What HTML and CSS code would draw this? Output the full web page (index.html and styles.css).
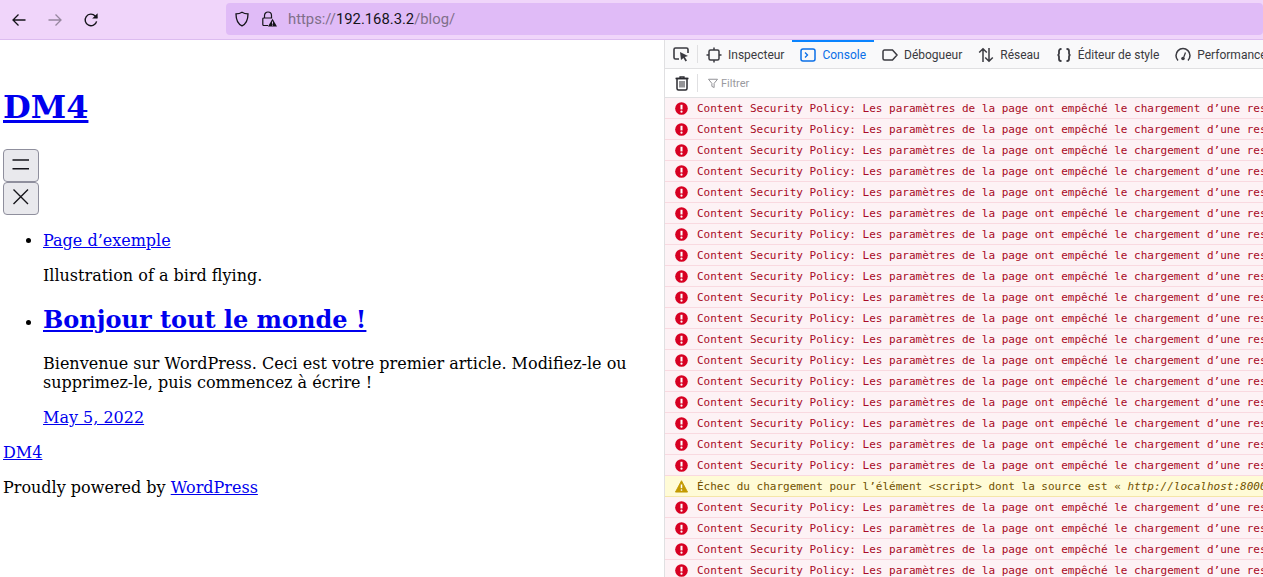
FILE: index.html
```html
<!DOCTYPE html>
<html lang="fr">
<head>
<meta charset="utf-8">
<title>DM4</title>
<link rel="stylesheet" href="styles.css">
</head>
<body>
<header class="toolbar">
  <div class="nav">
    <svg class="nav-ico" viewBox="0 0 16 16"><path d="M14.5 8H2M7.5 2.5 2 8l5.5 5.5" fill="none" stroke="#15141a" stroke-width="1.3"/></svg>
    <svg class="nav-ico dim" viewBox="0 0 16 16"><path d="M1.5 8H14M8.5 2.5 14 8l-5.5 5.5" fill="none" stroke="#15141a" stroke-width="1.3"/></svg>
    <svg class="nav-ico" viewBox="0 0 16 16"><path d="M13.6 9.3A5.8 5.8 0 1 1 12.2 4L14 5.8" fill="none" stroke="#15141a" stroke-width="1.4"/><path d="M14.6 1.2v5.4H9.2z" fill="#15141a"/></svg>
  </div>
  <div class="urlbar">
    <svg class="shield" viewBox="0 0 16 16"><path d="M8 1.2c2 1.2 4 1.6 6 1.7 0 5.5-1.5 9.7-6 11.9C3.500 12.600 2 8.400 2 2.900c2-.1 4-.5 6-1.700z" fill="none" stroke="#15141a" stroke-width="1.300"/></svg>
    <svg class="lock" viewBox="0 0 16 16"><path d="M3.500 7V4.500a3.500 3.500 0 0 1 7 0V7M7 14.500H2.800a1 1 0 0 1-1-1V8a1 1 0 0 1 1-1h8.400" fill="none" stroke="#15141a" stroke-width="1.200"/><path d="M11.500 7.800 16 15.500H7z" fill="#15141a"/><path d="M11.500 10.500v2.300M11.500 13.600v.9" stroke="#e0bbf7" stroke-width="1"/></svg>
    <span class="url"><span class="url-dim">https://</span>192.168.3.2<span class="url-dim">/blog/</span></span>
  </div>
</header>
<main class="split">
  <section class="page">
    <h1 class="site-title"><a href="#">DM4</a></h1>
    <button class="menu-btn" type="button"><svg viewBox="0 0 24 24"><path d="M3.500 6h16.500M3.500 14.800h16.500" stroke="#15141a" stroke-width="1.400"/></svg></button>
    <button class="menu-btn" type="button"><svg viewBox="0 0 24 24"><path d="M4.500 2.500l14.500 14.500M19 2.500 4.500 17" stroke="#15141a" stroke-width="1.400"/></svg></button>
    <ul class="posts">
      <li>
        <a href="#">Page d’exemple</a>
        <p>Illustration of a bird flying.</p>
      </li>
      <li>
        <h2 class="post-title"><a href="#">Bonjour tout le monde !</a></h2>
        <p>Bienvenue sur WordPress. Ceci est votre premier article. Modifiez-le ou supprimez-le, puis commencez à écrire !</p>
        <p><a href="#">May 5, 2022</a></p>
      </li>
    </ul>
    <p><a href="#">DM4</a></p>
    <p>Proudly powered by <a href="#">WordPress</a></p>
  </section>
  <section class="devtools">
    <nav class="tabs">
      <div class="picker">
        <svg class="ico" viewBox="0 0 16 16"><path d="M6 13H2.500A1.500 1.500 0 0 1 1 11.500v-8A1.500 1.500 0 0 1 2.500 2h11A1.500 1.500 0 0 1 15 3.500V7" fill="none" stroke="#3a3a40" stroke-width="1.600"/><path d="M7 6l8 4-3.200 1 2.200 3.500-1.500.9-2.100-3.500L8 14z" fill="#3a3a40"/></svg>
      </div>
      <div class="tab">
        <svg class="ico" viewBox="0 0 16 16"><rect x="3" y="3" width="10" height="10" rx="1.500" fill="none" stroke="#3a3a40" stroke-width="1.500"/><path d="M8 .5v2.500M8 13v2.500M.5 8H3M13 8h2.500" stroke="#3a3a40" stroke-width="1.500"/></svg>
        Inspecteur
      </div>
      <div class="tab active">
        <svg class="ico" viewBox="0 0 16 16"><rect x="1" y="2" width="14" height="12" rx="2" fill="none" stroke="#0a6fe8" stroke-width="1.500"/><path d="M5 5.500 7.500 8 5 10.500" fill="none" stroke="#0a6fe8" stroke-width="1.300"/></svg>
        Console
      </div>
      <div class="tab">
        <svg class="ico" viewBox="0 0 16 16"><path d="M2.500 3h8L15 8l-4.500 5h-8A1.500 1.500 0 0 1 1 11.500v-7A1.500 1.500 0 0 1 2.500 3z" fill="none" stroke="#3a3a40" stroke-width="1.500"/></svg>
        Débogueur
      </div>
      <div class="tab">
        <svg class="ico" viewBox="0 0 16 16"><path d="M5 15V2M1.200 5.500 5 1.700l3.800 3.800M11 1v13M7.200 10.500 11 14.300l3.800-3.800" fill="none" stroke="#3a3a40" stroke-width="1.500"/></svg>
        Réseau
      </div>
      <div class="tab">
        <svg class="ico" viewBox="0 0 16 16"><path d="M5.500 2H5a2 2 0 0 0-2 2v2.500C3 7.500 2 8 1.500 8 2 8 3 8.500 3 9.500V12a2 2 0 0 0 2 2h.5M10.500 2h.5a2 2 0 0 1 2 2v2.500c0 1 1 1.500 1.500 1.500-.5 0-1.500.5-1.500 1.500V12a2 2 0 0 1-2 2h-.5" fill="none" stroke="#3a3a40" stroke-width="1.800"/></svg>
        Éditeur de style
      </div>
      <div class="tab">
        <svg class="ico" viewBox="0 0 16 16"><path d="M3 13.500a7 7 0 1 1 10 0" fill="none" stroke="#3a3a40" stroke-width="1.500"/><path d="M10.500 5.500 8.800 10" stroke="#3a3a40" stroke-width="1.300"/><circle cx="8" cy="11.500" r="1.800" fill="#3a3a40"/></svg>
        Performances
      </div>
    </nav>
    <div class="filterbar">
      <div class="trash">
        <svg class="ico" viewBox="0 0 16 16"><path d="M1.500 3.500h13M6 3.500V1.800h4v1.700" fill="none" stroke="#2b2b30" stroke-width="1.300"/><path d="M3 3.500h10v10a1.500 1.500 0 0 1-1.500 1.500h-7A1.500 1.500 0 0 1 3 13.500z" fill="none" stroke="#2b2b30" stroke-width="1.500"/><path d="M6 6v6.500M8 6v6.500M10 6v6.500" stroke="#2b2b30" stroke-width="1"/></svg>
      </div>
      <div class="filter">
        <svg class="funnel" viewBox="0 0 16 16"><path d="M2 3h12L9.500 8.500V14l-3-1.500v-4z" fill="none" stroke="#8f8f94" stroke-width="1.300"/></svg>
        Filtrer
      </div>
    </div>
    <div class="log">
      <div class="msg"><svg class="msg-ico" viewBox="0 0 14 14"><circle cx="7" cy="7" r="6.800" fill="#d70022"/><path d="M7 3v5" stroke="#fff" stroke-width="2.200"/><circle cx="7" cy="10.400" r="1.200" fill="#fff"/></svg><span class="msg-text">Content Security Policy: Les paramètres de la page ont empêché le chargement d’une ressource</span></div>
      <div class="msg"><svg class="msg-ico" viewBox="0 0 14 14"><circle cx="7" cy="7" r="6.800" fill="#d70022"/><path d="M7 3v5" stroke="#fff" stroke-width="2.200"/><circle cx="7" cy="10.400" r="1.200" fill="#fff"/></svg><span class="msg-text">Content Security Policy: Les paramètres de la page ont empêché le chargement d’une ressource</span></div>
      <div class="msg"><svg class="msg-ico" viewBox="0 0 14 14"><circle cx="7" cy="7" r="6.800" fill="#d70022"/><path d="M7 3v5" stroke="#fff" stroke-width="2.200"/><circle cx="7" cy="10.400" r="1.200" fill="#fff"/></svg><span class="msg-text">Content Security Policy: Les paramètres de la page ont empêché le chargement d’une ressource</span></div>
      <div class="msg"><svg class="msg-ico" viewBox="0 0 14 14"><circle cx="7" cy="7" r="6.800" fill="#d70022"/><path d="M7 3v5" stroke="#fff" stroke-width="2.200"/><circle cx="7" cy="10.400" r="1.200" fill="#fff"/></svg><span class="msg-text">Content Security Policy: Les paramètres de la page ont empêché le chargement d’une ressource</span></div>
      <div class="msg"><svg class="msg-ico" viewBox="0 0 14 14"><circle cx="7" cy="7" r="6.800" fill="#d70022"/><path d="M7 3v5" stroke="#fff" stroke-width="2.200"/><circle cx="7" cy="10.400" r="1.200" fill="#fff"/></svg><span class="msg-text">Content Security Policy: Les paramètres de la page ont empêché le chargement d’une ressource</span></div>
      <div class="msg"><svg class="msg-ico" viewBox="0 0 14 14"><circle cx="7" cy="7" r="6.800" fill="#d70022"/><path d="M7 3v5" stroke="#fff" stroke-width="2.200"/><circle cx="7" cy="10.400" r="1.200" fill="#fff"/></svg><span class="msg-text">Content Security Policy: Les paramètres de la page ont empêché le chargement d’une ressource</span></div>
      <div class="msg"><svg class="msg-ico" viewBox="0 0 14 14"><circle cx="7" cy="7" r="6.800" fill="#d70022"/><path d="M7 3v5" stroke="#fff" stroke-width="2.200"/><circle cx="7" cy="10.400" r="1.200" fill="#fff"/></svg><span class="msg-text">Content Security Policy: Les paramètres de la page ont empêché le chargement d’une ressource</span></div>
      <div class="msg"><svg class="msg-ico" viewBox="0 0 14 14"><circle cx="7" cy="7" r="6.800" fill="#d70022"/><path d="M7 3v5" stroke="#fff" stroke-width="2.200"/><circle cx="7" cy="10.400" r="1.200" fill="#fff"/></svg><span class="msg-text">Content Security Policy: Les paramètres de la page ont empêché le chargement d’une ressource</span></div>
      <div class="msg"><svg class="msg-ico" viewBox="0 0 14 14"><circle cx="7" cy="7" r="6.800" fill="#d70022"/><path d="M7 3v5" stroke="#fff" stroke-width="2.200"/><circle cx="7" cy="10.400" r="1.200" fill="#fff"/></svg><span class="msg-text">Content Security Policy: Les paramètres de la page ont empêché le chargement d’une ressource</span></div>
      <div class="msg"><svg class="msg-ico" viewBox="0 0 14 14"><circle cx="7" cy="7" r="6.800" fill="#d70022"/><path d="M7 3v5" stroke="#fff" stroke-width="2.200"/><circle cx="7" cy="10.400" r="1.200" fill="#fff"/></svg><span class="msg-text">Content Security Policy: Les paramètres de la page ont empêché le chargement d’une ressource</span></div>
      <div class="msg"><svg class="msg-ico" viewBox="0 0 14 14"><circle cx="7" cy="7" r="6.800" fill="#d70022"/><path d="M7 3v5" stroke="#fff" stroke-width="2.200"/><circle cx="7" cy="10.400" r="1.200" fill="#fff"/></svg><span class="msg-text">Content Security Policy: Les paramètres de la page ont empêché le chargement d’une ressource</span></div>
      <div class="msg"><svg class="msg-ico" viewBox="0 0 14 14"><circle cx="7" cy="7" r="6.800" fill="#d70022"/><path d="M7 3v5" stroke="#fff" stroke-width="2.200"/><circle cx="7" cy="10.400" r="1.200" fill="#fff"/></svg><span class="msg-text">Content Security Policy: Les paramètres de la page ont empêché le chargement d’une ressource</span></div>
      <div class="msg"><svg class="msg-ico" viewBox="0 0 14 14"><circle cx="7" cy="7" r="6.800" fill="#d70022"/><path d="M7 3v5" stroke="#fff" stroke-width="2.200"/><circle cx="7" cy="10.400" r="1.200" fill="#fff"/></svg><span class="msg-text">Content Security Policy: Les paramètres de la page ont empêché le chargement d’une ressource</span></div>
      <div class="msg"><svg class="msg-ico" viewBox="0 0 14 14"><circle cx="7" cy="7" r="6.800" fill="#d70022"/><path d="M7 3v5" stroke="#fff" stroke-width="2.200"/><circle cx="7" cy="10.400" r="1.200" fill="#fff"/></svg><span class="msg-text">Content Security Policy: Les paramètres de la page ont empêché le chargement d’une ressource</span></div>
      <div class="msg"><svg class="msg-ico" viewBox="0 0 14 14"><circle cx="7" cy="7" r="6.800" fill="#d70022"/><path d="M7 3v5" stroke="#fff" stroke-width="2.200"/><circle cx="7" cy="10.400" r="1.200" fill="#fff"/></svg><span class="msg-text">Content Security Policy: Les paramètres de la page ont empêché le chargement d’une ressource</span></div>
      <div class="msg"><svg class="msg-ico" viewBox="0 0 14 14"><circle cx="7" cy="7" r="6.800" fill="#d70022"/><path d="M7 3v5" stroke="#fff" stroke-width="2.200"/><circle cx="7" cy="10.400" r="1.200" fill="#fff"/></svg><span class="msg-text">Content Security Policy: Les paramètres de la page ont empêché le chargement d’une ressource</span></div>
      <div class="msg"><svg class="msg-ico" viewBox="0 0 14 14"><circle cx="7" cy="7" r="6.800" fill="#d70022"/><path d="M7 3v5" stroke="#fff" stroke-width="2.200"/><circle cx="7" cy="10.400" r="1.200" fill="#fff"/></svg><span class="msg-text">Content Security Policy: Les paramètres de la page ont empêché le chargement d’une ressource</span></div>
      <div class="msg"><svg class="msg-ico" viewBox="0 0 14 14"><circle cx="7" cy="7" r="6.800" fill="#d70022"/><path d="M7 3v5" stroke="#fff" stroke-width="2.200"/><circle cx="7" cy="10.400" r="1.200" fill="#fff"/></svg><span class="msg-text">Content Security Policy: Les paramètres de la page ont empêché le chargement d’une ressource</span></div>
      <div class="msg warn"><svg class="msg-ico" viewBox="0 0 14 14"><path d="M7 .8 13.500 13H.5z" fill="#c49a00" stroke="#c49a00" stroke-linejoin="round"/><path d="M7 4.800v4" stroke="#fff" stroke-width="1.600"/><circle cx="7" cy="10.800" r=".9" fill="#fff"/></svg><span class="msg-text">Échec du chargement pour l’élément &lt;script&gt; dont la source est « <em>http://localhost:8000/wp-includes/js/</em></span></div>
      <div class="msg"><svg class="msg-ico" viewBox="0 0 14 14"><circle cx="7" cy="7" r="6.800" fill="#d70022"/><path d="M7 3v5" stroke="#fff" stroke-width="2.200"/><circle cx="7" cy="10.400" r="1.200" fill="#fff"/></svg><span class="msg-text">Content Security Policy: Les paramètres de la page ont empêché le chargement d’une ressource</span></div>
      <div class="msg"><svg class="msg-ico" viewBox="0 0 14 14"><circle cx="7" cy="7" r="6.800" fill="#d70022"/><path d="M7 3v5" stroke="#fff" stroke-width="2.200"/><circle cx="7" cy="10.400" r="1.200" fill="#fff"/></svg><span class="msg-text">Content Security Policy: Les paramètres de la page ont empêché le chargement d’une ressource</span></div>
      <div class="msg"><svg class="msg-ico" viewBox="0 0 14 14"><circle cx="7" cy="7" r="6.800" fill="#d70022"/><path d="M7 3v5" stroke="#fff" stroke-width="2.200"/><circle cx="7" cy="10.400" r="1.200" fill="#fff"/></svg><span class="msg-text">Content Security Policy: Les paramètres de la page ont empêché le chargement d’une ressource</span></div>
      <div class="msg"><svg class="msg-ico" viewBox="0 0 14 14"><circle cx="7" cy="7" r="6.800" fill="#d70022"/><path d="M7 3v5" stroke="#fff" stroke-width="2.200"/><circle cx="7" cy="10.400" r="1.200" fill="#fff"/></svg><span class="msg-text">Content Security Policy: Les paramètres de la page ont empêché le chargement d’une ressource</span></div>
    </div>
  </section>
</main>
</body>
</html>
```
FILE: styles.css
```css
html, body {
  margin: 0;
  height: 100%;
  overflow: hidden;
  background: #fff;
}
body {
  display: flex;
  flex-direction: column;
}
.toolbar {
  flex: none;
  height: 39px;
  display: flex;
  align-items: center;
  gap: 0;
  background: #f0d5fa;
  border-bottom: 1px solid #dcbcf0;
  font-family: "Roboto", sans-serif;
}
.nav {
  display: flex;
  gap: 20px;
  width: 226px;
  padding-left: 11px;
  box-sizing: border-box;
}
.nav-ico {
  width: 16px;
  height: 16px;
}
.nav-ico.dim {
  opacity: .4;
}
.urlbar {
  flex: 1;
  height: 32px;
  margin-top: -1px;
  margin-right: 0;
  background: #e0bbf7;
  border-radius: 4px;
  display: flex;
  align-items: center;
  padding-left: 8px;
}
.shield {
  width: 16px;
  height: 16px;
  margin-right: 11px;
}
.lock {
  width: 16px;
  height: 16px;
  margin-right: 11px;
}
.url {
  font-size: 14.800px;
  color: #15141a;
}
.url-dim {
  color: #7f6f8a;
}
.split {
  flex: 1;
  display: flex;
  min-height: 0;
}
.page {
  width: 664px;
  flex: none;
  box-sizing: border-box;
  padding: 0 3px;
  font: 16px/19px "DejaVu Serif", serif;
  color: #000;
  overflow: hidden;
}
.page a {
  color: #0000ee;
}
.page p {
  margin: 16px 0;
}
.site-title {
  margin: 49px 0 23px;
  font-size: 32px;
  line-height: 37px;
}
.menu-btn {
  display: block;
  width: 36px;
  height: 33px;
  padding: 0;
  background: #e9e9ed;
  border: 1px solid #8f8f9d;
  border-radius: 4px;
}
.menu-btn svg {
  display: block;
  width: 24px;
  height: 24px;
  margin: 0 auto;
}
.posts {
  margin: 16px 0;
  padding-left: 40px;
}
.post-title {
  margin: 21px 0 20px;
  font-size: 24px;
  line-height: 28px;
}
.devtools {
  flex: 1;
  min-width: 0;
  border-left: 1px solid #e0e0e2;
  display: flex;
  flex-direction: column;
  overflow: hidden;
}
.tabs {
  flex: none;
  height: 28px;
  display: flex;
  background: #f9f9fa;
  border-bottom: 1px solid #e0e0e2;
  font: 12px/28px "Roboto", sans-serif;
  color: #3a3a40;
  white-space: nowrap;
}
.picker {
  width: 33px;
  box-sizing: border-box;
  flex: none;
  display: flex;
  align-items: center;
  padding-left: 8px;
  position: relative;
}
.picker::after, .trash::after {
  content: "";
  position: absolute;
  right: 0;
  top: 5px;
  bottom: 5px;
  width: 1px;
  background: #e0e0e2;
}
.ico {
  width: 16px;
  height: 16px;
  flex: none;
}
.tab {
  flex: none;
  display: flex;
  align-items: center;
  gap: 6px;
  padding: 1px 8px 0;
}
.tab.active {
  color: #0a6fe8;
  box-shadow: inset 0 2px 0 #0a84ff;
}
.filterbar {
  flex: none;
  height: 28px;
  display: flex;
  align-items: center;
  border-bottom: 1px solid #e0e0e2;
  background: #fff;
}
.trash {
  width: 33px;
  height: 28px;
  box-sizing: border-box;
  padding-left: 9px;
  display: flex;
  align-items: center;
  position: relative;
  flex: none;
}
.filter {
  display: flex;
  align-items: center;
  gap: 2px;
  margin-left: 9px;
  font: 11px "Roboto", sans-serif;
  color: #9a9a9f;
}
.funnel {
  width: 12px;
  height: 12px;
}
.log {
  flex: 1;
  overflow: hidden;
}
.msg {
  height: 20px;
  display: flex;
  align-items: center;
  background: #fdf2f5;
  border-bottom: 1px solid #f9d9e0;
  color: #a80a25;
  font: 11px/20px "DejaVu Sans Mono", monospace;
  white-space: nowrap;
  overflow: hidden;
}
.msg.warn {
  background: #fffbd6;
  border-bottom-color: #f5e6a8;
  color: #715100;
}
.msg-ico {
  flex: none;
  width: 13px;
  height: 13px;
  margin: 0 9px 0 10px;
}
.msg-text {
  flex: none;
  padding-top: 2px;
}
```
